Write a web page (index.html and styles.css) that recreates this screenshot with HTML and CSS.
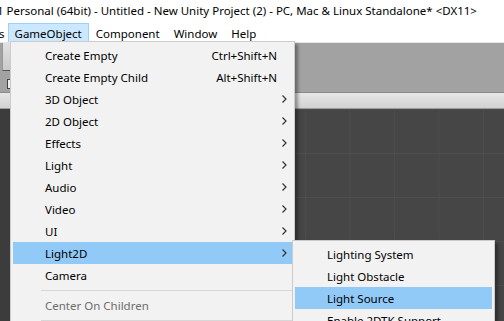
FILE: index.html
```html
<!DOCTYPE html>
<html lang="en">
<head>
    <meta charset="UTF-8">
    <title>Unity - GameObject menu</title>
    <link rel="stylesheet" href="styles.css">
</head>
<body>
    <div class="titlebar">1 Personal (64bit) - Untitled - New Unity Project (2) - PC, Mac &amp; Linux Standalone* &lt;DX11&gt;</div>

    <div class="menubar">
        <span class="menubar-item cut">Assets</span>
        <span class="menubar-item open">GameObject</span>
        <span class="menubar-item">Component</span>
        <span class="menubar-item">Window</span>
        <span class="menubar-item">Help</span>
    </div>

    <div class="editor">
        <div class="toolbar">
            <div class="tool-button"></div>
            <div class="tool-icon"></div>
        </div>
        <div class="tabbar"></div>
        <div class="panels">
            <div class="hierarchy"></div>
            <div class="scene"></div>
        </div>
    </div>

    <!-- GameObject dropdown -->
    <div class="menu main-menu">
        <div class="item"><span class="label">Create Empty</span><span class="shortcut">Ctrl+Shift+N</span><span class="arrow"></span></div>
        <div class="item"><span class="label">Create Empty Child</span><span class="shortcut">Alt+Shift+N</span><span class="arrow"></span></div>
        <div class="item sub"><span class="label">3D Object</span><span class="arrow"><svg width="5" height="8" viewBox="0 0 5 8"><path d="M0.5 0.5 L4 4 L0.5 7.5" /></svg></span></div>
        <div class="item sub"><span class="label">2D Object</span><span class="arrow"><svg width="5" height="8" viewBox="0 0 5 8"><path d="M0.5 0.5 L4 4 L0.5 7.5" /></svg></span></div>
        <div class="item sub"><span class="label">Effects</span><span class="arrow"><svg width="5" height="8" viewBox="0 0 5 8"><path d="M0.5 0.5 L4 4 L0.5 7.5" /></svg></span></div>
        <div class="item sub"><span class="label">Light</span><span class="arrow"><svg width="5" height="8" viewBox="0 0 5 8"><path d="M0.5 0.5 L4 4 L0.5 7.5" /></svg></span></div>
        <div class="item sub"><span class="label">Audio</span><span class="arrow"><svg width="5" height="8" viewBox="0 0 5 8"><path d="M0.5 0.5 L4 4 L0.5 7.5" /></svg></span></div>
        <div class="item sub"><span class="label">Video</span><span class="arrow"><svg width="5" height="8" viewBox="0 0 5 8"><path d="M0.5 0.5 L4 4 L0.5 7.5" /></svg></span></div>
        <div class="item sub"><span class="label">UI</span><span class="arrow"><svg width="5" height="8" viewBox="0 0 5 8"><path d="M0.5 0.5 L4 4 L0.5 7.5" /></svg></span></div>
        <div class="item sub active"><span class="label">Light2D</span><span class="arrow"><svg width="5" height="8" viewBox="0 0 5 8"><path d="M0.5 0.5 L4 4 L0.5 7.5" /></svg></span></div>
        <div class="item"><span class="label">Camera</span><span class="arrow"></span></div>
        <div class="separator"></div>
        <div class="item disabled"><span class="label">Center On Children</span><span class="arrow"></span></div>
        <div class="separator"></div>
    </div>

    <!-- Light2D submenu -->
    <div class="menu sub-menu">
        <div class="item"><span class="label">Lighting System</span></div>
        <div class="item"><span class="label">Light Obstacle</span></div>
        <div class="item active"><span class="label">Light Source</span></div>
        <div class="item"><span class="label">Enable 2DTK Support</span></div>
    </div>
</body>
</html>
```

FILE: styles.css
```css
body {
    margin: 0;
    width: 504px;
    height: 321px;
    overflow: hidden;
    position: relative;
    font-family: "Noto Sans", "Open Sans", sans-serif;
    font-size: 11.5px;
    color: #000;
    background: #fff;
}

.titlebar {
    height: 22px;
    line-height: 22px;
    white-space: nowrap;
    margin-left: -3px;
    background: #fff;
}

.menubar {
    height: 20px;
    display: flex;
    align-items: stretch;
    background: #fff;
}

.menubar-item {
    display: flex;
    align-items: center;
    padding: 0 6px;
    border: 1px solid transparent;
    border-bottom: 0;
    margin-top: 1px;
}

.menubar-item.cut {
    margin-left: -37px;
    padding-right: 2px;
}

.menubar-item.open {
    background: #cce8ff;
    border-color: #99d1ff;
}

/* editor behind the menus */
.editor {
    height: 279px;
    display: flex;
    flex-direction: column;
    border-top: 1px solid #e6e6e6;
}

.toolbar {
    height: 49px;
    background: #a2a2a2;
    border-bottom: 1px solid #8a8a8a;
    position: relative;
}

.tool-button {
    width: 10px;
    height: 27px;
    background: linear-gradient(#e2e2e2, #c9c9c9);
    border-left: 1px solid #999;
    margin-left: 2px;
    border-bottom: 1px solid #555;
}

.tool-icon {
    width: 3px;
    height: 8px;
    margin: 8px 0 0 7px;
    border: 1px solid #444;
    background: #eee;
}

.tabbar {
    height: 15px;
    background: linear-gradient(#e6e6e6, #d2d2d2);
    border-bottom: 1px solid #9a9a9a;
}

.panels {
    flex: 1;
    display: flex;
}

.hierarchy {
    width: 12px;
    background: #3c3c3c;
}

.scene {
    flex: 1;
    background-color: #464646;
    background-image:
        linear-gradient(90deg, #4d4d4d 1px, transparent 1px),
        linear-gradient(#4d4d4d 1px, transparent 1px);
    background-size: 44.5px 44px;
    background-position: 26px 44px;
}

/* popup menus */
.menu {
    position: absolute;
    background: #f2f2f2;
    border: 1px solid #cccccc;
    padding: 2px;
    box-shadow: 3px 3px 3px rgba(0, 0, 0, 0.35);
}

.main-menu {
    left: 10px;
    top: 41px;
    width: 279px;
}

.sub-menu {
    left: 292px;
    top: 240px;
    width: 197px;
}

.item {
    height: 22px;
    display: flex;
    align-items: center;
    padding-left: 32px;
    white-space: nowrap;
}

.item.active {
    background: #91c9f7;
}

.item.disabled {
    color: #6d6d6d;
}

.label {
    flex: 1;
}

.shortcut {
    text-align: right;
}

.arrow {
    width: 15px;
    display: flex;
    justify-content: center;
    align-items: center;
}

.arrow svg {
    fill: none;
    stroke: #333;
    stroke-width: 1.2;
}

.separator {
    height: 1px;
    background: #d7d7d7;
    margin: 4px 0 3px 28px;
}
```
